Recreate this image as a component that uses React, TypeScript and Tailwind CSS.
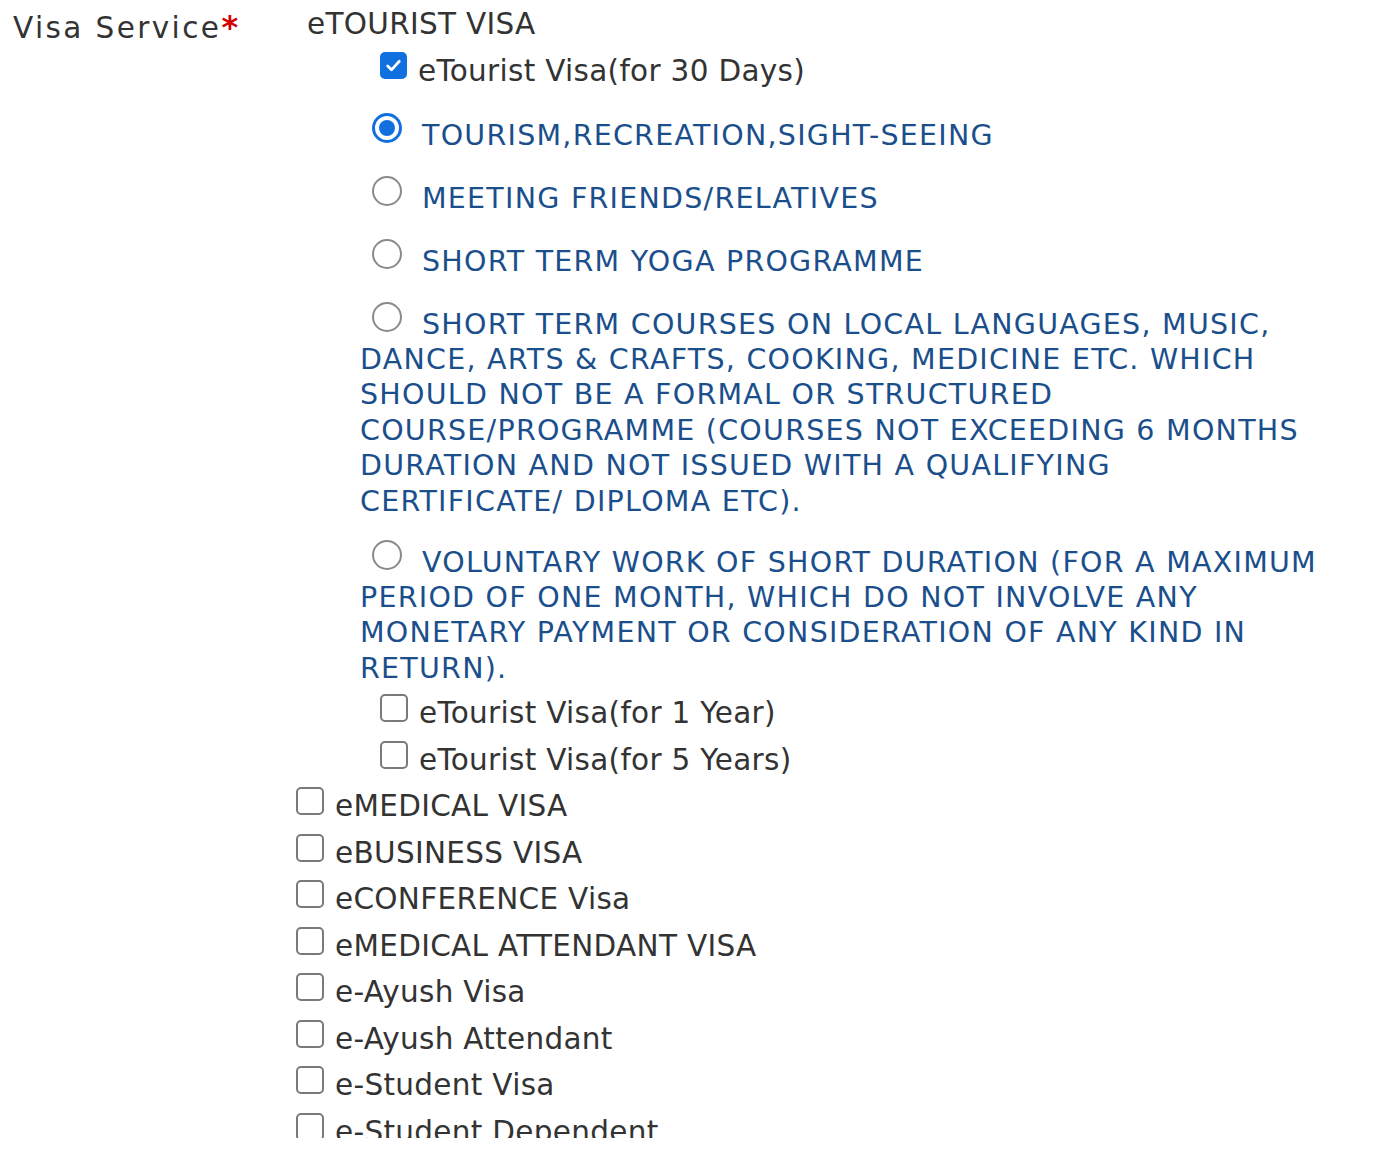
import React from 'react';

const BLACK = 'font-["DejaVu_Sans",Verdana,sans-serif] text-[29.5px] tracking-[0.3px] text-[#333333]';
const BLUE = 'font-["DejaVu_Sans",Tahoma,sans-serif] text-[28.5px] tracking-[1.25px] leading-[35.4px] text-[#1b4f8c] whitespace-nowrap';

const Box: React.FC<{ checked?: boolean }> = ({ checked }) =>
  checked ? (
    <span className="w-[27px] h-[27px] rounded-[5px] bg-[#1170e0] flex items-center justify-center shrink-0 mb-[11px]">
      <svg width="19" height="19" viewBox="0 0 18 18" fill="none">
        <path d="M3.5 9.5l3.6 3.6L14.5 5" stroke="white" strokeWidth="2.6" strokeLinecap="round" strokeLinejoin="round" />
      </svg>
    </span>
  ) : (
    <span className="w-[28px] h-[28px] rounded-[5px] border-2 border-[#7a7a7a] bg-white shrink-0 mb-[10px]" />
  );

const Radio: React.FC<{ checked?: boolean }> = ({ checked }) =>
  checked ? (
    <span className="relative -top-[9px] inline-flex w-[30px] h-[30px] rounded-full border-[3px] border-[#1170e0] items-center justify-center ml-[12px] mr-[20px] align-middle">
      <span className="w-[16px] h-[16px] rounded-full bg-[#1170e0]" />
    </span>
  ) : (
    <span className="relative -top-[9px] inline-block w-[30px] h-[30px] rounded-full border-2 border-[#8a8a8a] bg-white ml-[12px] mr-[20px] align-middle" />
  );

const CheckRow: React.FC<{ label: string; checked?: boolean; className?: string }> = ({ label, checked, className }) => (
  <div className={`flex items-center h-[46.5px] ${className ?? ''}`}>
    <Box checked={checked} />
    <span className={`${BLACK} ml-[11px] whitespace-nowrap`}>{label}</span>
  </div>
);

const purposes: { lines: string[]; mt: string }[] = [
  { lines: ['TOURISM,RECREATION,SIGHT-SEEING'], mt: 'mt-[23px]' },
  { lines: ['MEETING FRIENDS/RELATIVES'], mt: 'mt-[27.6px]' },
  { lines: ['SHORT TERM YOGA PROGRAMME'], mt: 'mt-[27.6px]' },
  {
    lines: [
      'SHORT TERM COURSES ON LOCAL LANGUAGES, MUSIC,',
      'DANCE, ARTS & CRAFTS, COOKING, MEDICINE ETC. WHICH',
      'SHOULD NOT BE A FORMAL OR STRUCTURED',
      'COURSE/PROGRAMME (COURSES NOT EXCEEDING 6 MONTHS',
      'DURATION AND NOT ISSUED WITH A QUALIFYING',
      'CERTIFICATE/ DIPLOMA ETC).',
    ],
    mt: 'mt-[27.6px]',
  },
  {
    lines: [
      'VOLUNTARY WORK OF SHORT DURATION (FOR A MAXIMUM',
      'PERIOD OF ONE MONTH, WHICH DO NOT INVOLVE ANY',
      'MONETARY PAYMENT OR CONSIDERATION OF ANY KIND IN',
      'RETURN).',
    ],
    mt: 'mt-[25.6px]',
  },
];

const otherVisas = [
  'eMEDICAL VISA',
  'eBUSINESS VISA',
  'eCONFERENCE Visa',
  'eMEDICAL ATTENDANT VISA',
  'e-Ayush Visa',
  'e-Ayush Attendant',
  'e-Student Visa',
  'e-Student Dependent',
];

export default function App() {
  return (
    <div className="h-[1138px] overflow-hidden bg-white">
      <div className="flex">
        <div className={`w-[296px] shrink-0 pl-[13px] pt-[3px] leading-[48px] ${BLACK} tracking-[2.4px]`}>
          Visa Service<span className="text-[#d40000] text-[32px] font-bold">*</span>
        </div>
        <div className="flex-1">
          <div className={`pl-[11px] leading-[48px] ${BLACK}`}>eTOURIST VISA</div>
          <div className="pl-[84px]">
            <CheckRow label="eTourist Visa(for 30 Days)" checked className="h-[44px]" />
          </div>
          <div className="pl-[64px]">
            {purposes.map((p, i) => (
              <p key={i} className={`${BLUE} ${p.mt}`}>
                <Radio checked={i === 0} />
                {p.lines.map((l, j) => (
                  <React.Fragment key={j}>
                    {j > 0 && <br />}
                    {l}
                  </React.Fragment>
                ))}
              </p>
            ))}
          </div>
          <div className="pl-[84px] mt-[4px]">
            <CheckRow label="eTourist Visa(for 1 Year)" />
            <CheckRow label="eTourist Visa(for 5 Years)" />
          </div>
          <div>
            {otherVisas.map((v) => (
              <CheckRow key={v} label={v} />
            ))}
          </div>
        </div>
      </div>
    </div>
  );
}
